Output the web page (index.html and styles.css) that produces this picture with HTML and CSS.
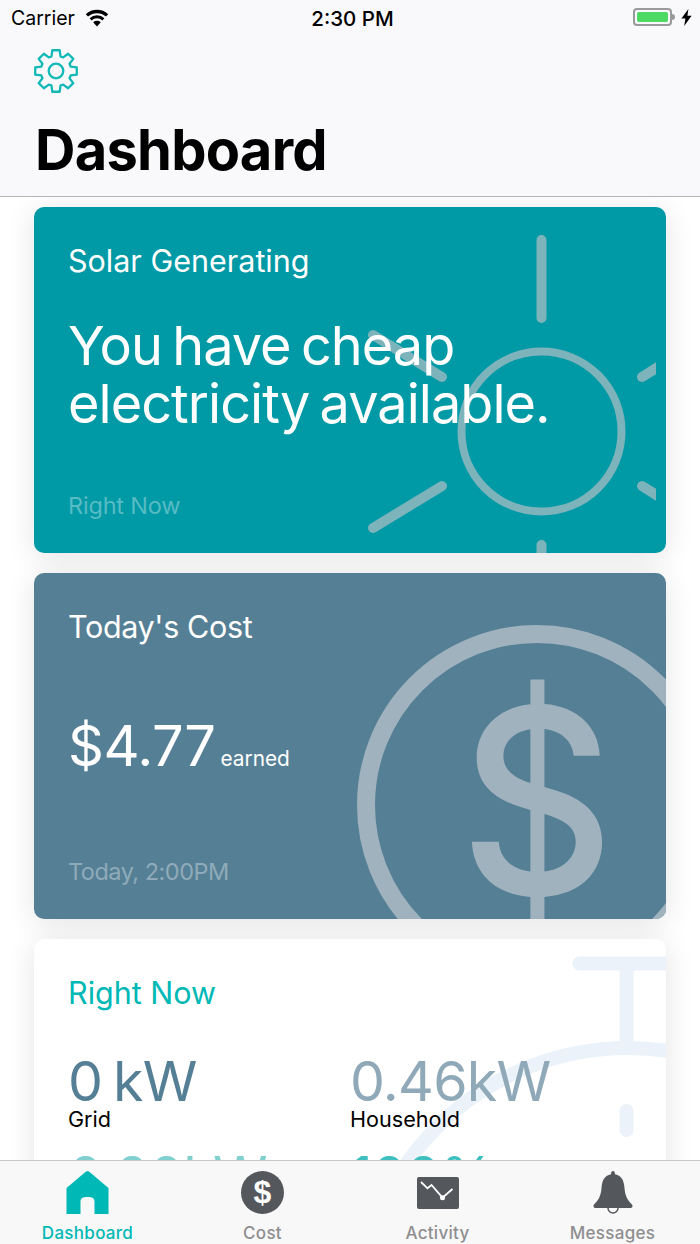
FILE: index.html
```html
<!DOCTYPE html>
<html>
<head>
    <title>Dashboard</title>
    <link rel="stylesheet" href="styles.css">
</head>
<body>
    <div class="phone">
        <header class="top">
            <div class="status-bar">
                <div class="status-left">
                    <span class="carrier">Carrier</span>
                    <svg class="wifi" width="24" height="18" viewBox="0 0 24 18">
                        <path d="M12 17.5 8.2 13.2a5.6 5.6 0 0 1 7.6 0Z"/>
                        <path d="M6.6 11.4 4.6 9.2a11 11 0 0 1 14.8 0l-2 2.2a8 8 0 0 0-10.8 0Z"/>
                        <path d="M3 7.6 .8 5.2a16.6 16.6 0 0 1 22.4 0L21 7.6a13.4 13.4 0 0 0-18 0Z"/>
                    </svg>
                </div>
                <span class="time">2:30 PM</span>
                <div class="status-right">
                    <div class="battery"><div class="battery-level"></div></div>
                    <div class="battery-tip"></div>
                    <svg class="bolt" width="11" height="17" viewBox="0 0 11 17">
                        <path d="M7.4 0 .4 9.6h4L3.2 17l7.4-10.2H6.4Z"/>
                    </svg>
                </div>
            </div>
            <svg class="gear" width="46" height="46" viewBox="-24 -24 48 48">
                <path d="M-4.68-15.3-3.82-21.67 3.82-21.67 4.68-15.3 7.51-14.13 12.62-18.02 18.02-12.62 14.13-7.51 15.3-4.68 21.67-3.82 21.67 3.82 15.3 4.68 14.13 7.51 18.02 12.62 12.62 18.02 7.51 14.13 4.68 15.3 3.82 21.67-3.82 21.67-4.68 15.3-7.51 14.13-12.62 18.02-18.02 12.62-14.13 7.51-15.3 4.68-21.67 3.82-21.67-3.82-15.3-4.68-14.13-7.51-18.02-12.62-12.62-18.02-7.51-14.13Z"/>
                <circle r="7.6"/>
            </svg>
            <h1>Dashboard</h1>
        </header>

        <main class="content">
            <section class="card card-solar">
                <svg class="sun" width="300" height="346" viewBox="0 0 300 346">
                    <circle cx="185.5" cy="224.5" r="80"/>
                    <path d="M185.5 33V111M17 321 86 279M17 128 86 170M286 170 350 130M286 279 350 319M185.5 338V416"/>
                </svg>
                <div class="card-title">Solar Generating</div>
                <div class="card-main">You have cheap<br>electricity available.</div>
                <div class="card-foot">Right Now</div>
            </section>

            <section class="card card-cost">
                <svg class="coin" width="632" height="346" viewBox="0 0 632 346">
                    <circle cx="503" cy="232" r="171"/>
                    <text transform="translate(503 321) scale(.93 1)" text-anchor="middle">$</text>
                </svg>
                <div class="card-title cost-title">Today's Cost</div>
                <div class="cost-value">
                    <span class="cost-amount">$4.77</span>
                    <span class="cost-note">earned</span>
                </div>
                <div class="card-foot cost-foot">Today, 2:00PM</div>
            </section>

            <section class="card card-now">
                <svg class="gauge" width="632" height="300" viewBox="0 0 632 300">
                    <path d="M545.5 24.5H640M592.5 24.5V105M592.5 172V191"/>
                    <circle cx="594" cy="379" r="270"/>
                </svg>
                <div class="now-title">Right Now</div>
                <div class="now-grid">
                    <div class="stat">
                        <div class="stat-value stat-grid">0 kW</div>
                        <div class="stat-label">Grid</div>
                    </div>
                    <div class="stat">
                        <div class="stat-value stat-house">0.46kW</div>
                        <div class="stat-label">Household</div>
                    </div>
                    <div class="stat">
                        <div class="stat-value stat-solar">0.00kW</div>
                    </div>
                    <div class="stat">
                        <div class="stat-value stat-battery">100%</div>
                    </div>
                </div>
            </section>
        </main>

        <nav class="tabs">
            <div class="tab tab-active">
                <svg width="44" height="44" viewBox="0 0 44 44">
                    <path class="home" d="M20.5 .6C21.3 0 22.7 0 23.5 .6L43 17V43H29V31C29 27 27 26 22 26S15 27 15 31V43H1V17Z" transform="translate(-.5 0)"/>
                </svg>
                <span>Dashboard</span>
            </div>
            <div class="tab">
                <div class="cost-icon">$</div>
                <span>Cost</span>
            </div>
            <div class="tab">
                <svg width="44" height="44" viewBox="0 0 44 44">
                    <rect class="icon-fill" x="1" y="6" width="42" height="32" rx="2"/>
                    <path class="chart-line" d="M5 11 11.5 17.3 15.5 14 26.5 26.7 36.5 18"/>
                    <circle class="chart-dot" cx="26.5" cy="26.7" r="2.5"/>
                </svg>
                <span>Activity</span>
            </div>
            <div class="tab">
                <svg width="44" height="44" viewBox="0 0 44 44">
                    <path class="icon-fill" d="M22 0C23.2 0 24 1 24 3.2 31 4.8 33 10 33.5 17 34 25 37 30 41 33.5 42 34.5 41.5 37 39.5 37H4.5C2.5 37 2 34.5 3 33.5 7 30 10 25 10.5 17 11 10 13 4.8 20 3.2 20 1 20.8 0 22 0Z"/>
                    <path class="bell-clapper" d="M17 37A5 5 0 0 0 27 37"/>
                </svg>
                <span>Messages</span>
            </div>
        </nav>
    </div>
</body>
</html>
```

FILE: styles.css
```css
html, body {
    margin: 0;
    padding: 0;
}
body {
    font-family: Inter, "Liberation Sans", sans-serif;
    background-color: white;
}
.phone {
    width: 700px;
    height: 1244px;
    display: flex;
    flex-direction: column;
    overflow: hidden;
}

/* header */
.top {
    flex: none;
    height: 196px;
    background-color: #f9f8fb;
    border-bottom: 1px solid #b5b5b7;
    display: flex;
    flex-direction: column;
}
.status-bar {
    height: 36px;
    padding: 0 8px 0 11px;
    display: flex;
    align-items: center;
    justify-content: space-between;
    font-size: 19.5px;
    color: black;
}
.status-left,
.status-right {
    width: 160px;
    display: flex;
    align-items: center;
}
.status-right {
    justify-content: flex-end;
    padding-bottom: 2px;
}
.wifi {
    margin-left: 10px;
}
.time {
    margin-left: 2px;
    font-size: 20.5px;
    font-weight: 500;
}
.battery {
    width: 39px;
    height: 18px;
    box-sizing: border-box;
    border: 2px solid #9a9a9c;
    border-radius: 4px;
    padding: 2px;
}
.battery-level {
    height: 100%;
    background-color: #4cd964;
    border-radius: 2px;
}
.battery-tip {
    width: 3px;
    height: 6px;
    background-color: #9a9a9c;
    border-radius: 0 3px 3px 0;
}
.bolt {
    margin-left: 6px;
}
.gear {
    margin: 12px 0 0 33px;
    fill: none;
    stroke: #12b9b6;
    stroke-width: 2.4;
    stroke-linejoin: round;
}
h1 {
    margin: 26px 0 0 35px;
    font-size: 56px;
    line-height: 60px;
    font-weight: 700;
    letter-spacing: -0.75px;
    color: black;
}

/* cards */
.content {
    flex: 1;
    min-height: 0;
    overflow: hidden;
    padding: 10px 34px 0;
    display: flex;
    flex-direction: column;
    gap: 20px;
}
.card {
    flex: none;
    height: 346px;
    box-sizing: border-box;
    position: relative;
    overflow: hidden;
    padding: 34px 34px 32px;
    border-radius: 10px;
    color: white;
    display: flex;
    flex-direction: column;
}
.card-solar,
.card-cost,
.card-now {
    box-shadow: 0 4px 30px rgba(0,0,0,0.11);
}
.card-solar {
    background-color: #0099a6;
}
.card-cost {
    background-color: #557f95;
}
.card-now {
    background-color: white;
    height: 400px;
}
.card > div {
    position: relative;
}
.card-title {
    font-size: 30.5px;
    line-height: 40px;
    font-weight: 400;
}
.cost-title {
    letter-spacing: -0.35px;
}
.card-main {
    margin-top: 36px;
    font-size: 54px;
    line-height: 58px;
    font-weight: 400;
    letter-spacing: -0.95px;
    word-spacing: -4px;
}
.card-foot {
    margin-top: auto;
    font-size: 23.5px;
    line-height: 30px;
    font-weight: 400;
    color: rgba(255,255,255,0.35);
    letter-spacing: -0.2px;
}
.cost-foot {
    letter-spacing: -0.5px;
}
.sun {
    position: absolute;
    right: 10px;
    top: 0;
    fill: none;
    stroke: #7db3bb;
    stroke-width: 8;
}
.sun path {
    stroke-width: 10;
    stroke-linecap: round;
}
.coin {
    position: absolute;
    left: 0;
    top: 0;
}
.coin circle {
    fill: none;
    stroke: #9fb2be;
    stroke-width: 18;
}
.coin text {
    font-family: Inter, sans-serif;
    font-size: 258px;
    font-weight: 500;
    fill: #9fb2be;
}
.cost-value {
    margin-top: 66px;
    display: flex;
    align-items: baseline;
    gap: 5px;
}
.cost-amount {
    font-size: 56px;
    line-height: 66px;
    font-weight: 400;
    letter-spacing: -0.5px;
}
.cost-note {
    font-size: 20.8px;
    font-weight: 400;
}

/* right now card */
.gauge {
    position: absolute;
    left: 0;
    top: 0;
    fill: none;
    stroke: #ebf2f9;
    stroke-width: 14;
    stroke-linecap: round;
}
.now-title {
    font-size: 30.5px;
    line-height: 40px;
    font-weight: 400;
    color: #00b8b5;
}
.now-grid {
    margin-top: 40px;
    display: grid;
    grid-template-columns: 282px 1fr;
    row-gap: 19px;
}
.stat-value {
    font-size: 55.5px;
    line-height: 56px;
    font-weight: 400;
    letter-spacing: -0.75px;
    word-spacing: -4px;
}
.stat-label {
    font-size: 21.6px;
    line-height: 20px;
    color: black;
}
.stat-grid {
    color: #557f95;
}
.stat-house {
    color: #8fa9b8;
}
.stat-solar {
    color: #7fd0cf;
}
.stat-battery {
    color: #3fc0c0;
}

/* tab bar */
.tabs {
    flex: none;
    height: 83px;
    background-color: #f8f8f8;
    border-top: 1px solid #c8c8ca;
    display: grid;
    grid-template-columns: repeat(4, 1fr);
    position: relative;
}
.tab {
    padding-top: 10px;
    display: flex;
    flex-direction: column;
    align-items: center;
    font-size: 17px;
    line-height: 22px;
    font-weight: 500;
    letter-spacing: 0.3px;
    color: #8e8e90;
}
.tab svg,
.cost-icon {
    display: block;
    margin-bottom: 7px;
}
.tab-active {
    color: #00b8b5;
}
.home {
    fill: #00b8b5;
}
.icon-fill {
    fill: #54575c;
}
.chart-line {
    fill: none;
    stroke: white;
    stroke-width: 1.8;
}
.chart-dot {
    fill: white;
}
.bell-clapper {
    fill: none;
    stroke: #54575c;
    stroke-width: 1.5;
}
.cost-icon {
    width: 43px;
    height: 43px;
    flex: none;
    margin-bottom: 8px;
    border-radius: 50%;
    background-color: #54575c;
    color: white;
    font-family: "Liberation Sans", sans-serif;
    font-size: 32px;
    font-weight: 700;
    line-height: 43px;
    text-align: center;
    letter-spacing: 0;
}
```
